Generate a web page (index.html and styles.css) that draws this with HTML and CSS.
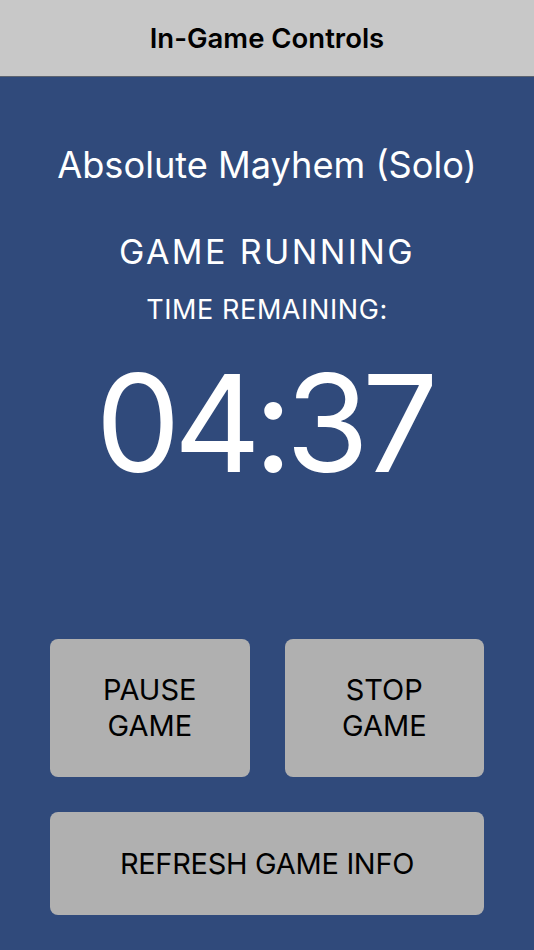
FILE: index.html
```html
<!DOCTYPE html>
<html>
<head>
<meta charset="utf-8">
<link rel="stylesheet" href="styles.css">
</head>
<body>
<header class="topbar"><h1 class="topbar-title">In-Game Controls</h1></header>
<main class="screen">
  <div class="game-name">Absolute Mayhem (Solo)</div>
  <div class="status">GAME RUNNING</div>
  <div class="time-label">TIME REMAINING:</div>
  <div class="timer">04:37</div>
  <div class="controls">
    <button class="btn">PAUSE<br>GAME</button>
    <button class="btn">STOP<br>GAME</button>
    <button class="btn btn-wide">REFRESH GAME INFO</button>
  </div>
</main>
</body>
</html>
```
FILE: styles.css
```css
* { box-sizing: border-box; }
html, body {
  margin: 0;
  padding: 0;
  height: 100%;
}
body {
  font-family: Inter, "Noto Sans", sans-serif;
  background: #304a7b;
  display: flex;
  flex-direction: column;
}
.topbar {
  height: 77px;
  background: #c8c8c8;
  border-bottom: 1px solid #5d6470;
  display: flex;
  align-items: center;
  justify-content: center;
  flex-shrink: 0;
}
.topbar-title {
  margin: 0;
  font-size: 27.5px;
  font-weight: 600;
  color: #000;
  line-height: 36px;
}
.screen {
  flex: 1;
  display: flex;
  flex-direction: column;
  align-items: center;
  padding: 66px 40px 0;
  color: #fff;
  text-align: center;
}
.game-name {
  font-size: 36.2px;
  line-height: 44px;
}
.status {
  font-size: 34px;
  line-height: 40px;
  letter-spacing: 2.4px;
  margin-top: 45px;
}
.time-label {
  font-size: 27px;
  line-height: 32px;
  letter-spacing: 0.6px;
  margin-top: 22px;
}
.timer {
  font-size: 135px;
  line-height: 140px;
  letter-spacing: -7px;
  text-indent: -7px;
  margin-top: 27px;
}
.controls {
  align-self: stretch;
  margin: 146px 10px 0;
  display: grid;
  grid-template-columns: 1fr 1fr;
  column-gap: 35px;
  row-gap: 35px;
}
.btn {
  font-family: Inter, "Noto Sans", sans-serif;
  font-size: 29px;
  line-height: 36px;
  color: #000;
  background: #b0b0b0;
  border: none;
  border-radius: 8px;
  height: 138px;
  padding: 0;
}
.btn-wide {
  grid-column: 1 / span 2;
  height: 103px;
  letter-spacing: -0.3px;
}
```
